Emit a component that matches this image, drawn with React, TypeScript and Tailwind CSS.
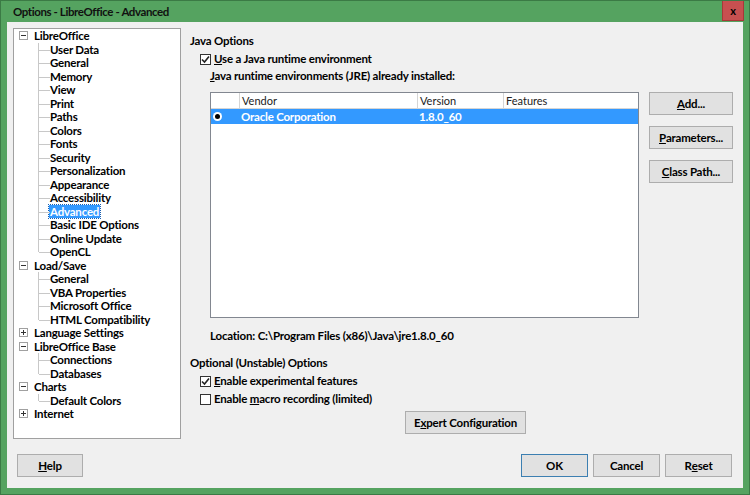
import React from "react";

const font = { fontFamily: 'Lato, "Noto Sans", "Liberation Sans", sans-serif' };

type Node = { label: string; depth: 0 | 1; expander?: "minus" | "plus"; selected?: boolean; last?: boolean };

const tree: Node[] = [
  { label: "LibreOffice", depth: 0, expander: "minus" },
  { label: "User Data", depth: 1 },
  { label: "General", depth: 1 },
  { label: "Memory", depth: 1 },
  { label: "View", depth: 1 },
  { label: "Print", depth: 1 },
  { label: "Paths", depth: 1 },
  { label: "Colors", depth: 1 },
  { label: "Fonts", depth: 1 },
  { label: "Security", depth: 1 },
  { label: "Personalization", depth: 1 },
  { label: "Appearance", depth: 1 },
  { label: "Accessibility", depth: 1 },
  { label: "Advanced", depth: 1, selected: true },
  { label: "Basic IDE Options", depth: 1 },
  { label: "Online Update", depth: 1 },
  { label: "OpenCL", depth: 1, last: true },
  { label: "Load/Save", depth: 0, expander: "minus" },
  { label: "General", depth: 1 },
  { label: "VBA Properties", depth: 1 },
  { label: "Microsoft Office", depth: 1 },
  { label: "HTML Compatibility", depth: 1, last: true },
  { label: "Language Settings", depth: 0, expander: "plus" },
  { label: "LibreOffice Base", depth: 0, expander: "minus" },
  { label: "Connections", depth: 1 },
  { label: "Databases", depth: 1, last: true },
  { label: "Charts", depth: 0, expander: "minus" },
  { label: "Default Colors", depth: 1, last: true },
  { label: "Internet", depth: 0, expander: "plus" },
];

const Expander = ({ kind }: { kind: "minus" | "plus" }) => (
  <div className="relative w-[9px] h-[9px] border border-[#a0a0a0] bg-white">
    <div className="absolute left-[1px] top-[3px] w-[5px] h-[1px] bg-[#333]" />
    {kind === "plus" && <div className="absolute left-[3px] top-[1px] w-[1px] h-[5px] bg-[#333]" />}
  </div>
);

const TreeRow = ({ n }: { n: Node }) => {
  if (n.depth === 0) {
    return (
      <div className="relative flex items-center h-[13.5px]">
        <div className="w-[20px] pl-[5px] flex items-center">
          {n.expander && <Expander kind={n.expander} />}
        </div>
        <span className="font-bold text-[11.5px] leading-[13px] tracking-[-0.2px] text-black">{n.label}</span>
      </div>
    );
  }
  return (
    <div className="relative flex items-center h-[13.5px]">
      <div className={`absolute left-[24px] top-0 w-[1px] bg-[#c8c8c8] ${n.last ? "h-[7px]" : "h-full"}`} />
      <div className="absolute left-[25px] top-[7px] w-[11px] h-[1px] bg-[#c8c8c8]" />
      <span
        className={`ml-[35px] px-[1px] font-bold text-[11.5px] leading-[13px] tracking-[-0.2px] ${
          n.selected ? "bg-[#3399ff] text-white outline outline-1 outline-dotted outline-[#1a5fb0]" : "text-black"
        }`}
      >
        {n.label}
      </span>
    </div>
  );
};

const Check = ({ on }: { on: boolean }) => (
  <div className="w-[11px] h-[11px] border border-[#333] bg-white flex items-center justify-center">
    {on && (
      <svg width="9" height="9" viewBox="0 0 9 9">
        <path d="M1 4.5 L3.5 7 L8 1.5" fill="none" stroke="#222" strokeWidth="1.6" />
      </svg>
    )}
  </div>
);

const Btn = ({ children, w, def }: { children: React.ReactNode; w: string; def?: boolean }) => (
  <div
    className={`${w} h-[23px] flex items-center justify-center bg-[#e1e1e1] border ${
      def ? "border-[#3c7fb1]" : "border-[#adadad]"
    } font-bold text-[11.5px] tracking-[-0.2px] text-black`}
  >
    {children}
  </div>
);

export default function App() {
  return (
    <div style={font} className="w-[750px] h-[495px] bg-[#55a360] border border-[#3b7a45] flex flex-col overflow-hidden">
      {/* Title bar */}
      <div className="h-[21px] flex items-center justify-between">
        <span className="pl-[12px] font-bold text-[11.5px] tracking-[-0.4px] text-[#111]">Options - LibreOffice - Advanced</span>
        <div className="mr-[5px] self-start w-[22px] h-[20px] bg-[#c75050] border border-[#a83838] border-t-0 flex items-center justify-center">
          <span className="font-bold text-[11px] text-black leading-none">x</span>
        </div>
      </div>

      {/* Client area */}
      <div className="flex-1 mx-[6px] mb-[6px] bg-[#f0f0f0] flex flex-col">
        <div className="flex mt-[6px] ml-[6px]">
          {/* Tree */}
          <div className="w-[168px] h-[411px] bg-white border border-[#a0a0a0]">
            {tree.map((n, i) => (
              <TreeRow key={i} n={n} />
            ))}
          </div>

          {/* Right panel */}
          <div className="ml-[9px] flex flex-col text-[11.5px] tracking-[-0.2px] font-bold text-black">
            <div className="mt-[6px] h-[14px] leading-[14px]">Java Options</div>
            <div className="mt-[4px] h-[14px] flex items-center gap-[3px] ml-[10px]">
              <Check on />
              <span>
                <span className="underline">U</span>se a Java runtime environment
              </span>
            </div>
            <div className="mt-[3px] h-[14px] leading-[14px] ml-[20px]">
              <span className="underline">J</span>ava runtime environments (JRE) already installed:
            </div>

            <div className="mt-[9px] ml-[20px] flex">
              {/* Table */}
              <div className="w-[429px] h-[226px] bg-white border border-[#828790] flex flex-col">
                <div className="h-[16px] flex border-b border-[#d5d5d5] font-normal text-[11px] tracking-normal text-[#222]">
                  <div className="w-[29px] border-r border-[#d5d5d5]" />
                  <div className="w-[178px] border-r border-[#d5d5d5] pl-[2px] leading-[15px]">Vendor</div>
                  <div className="w-[86px] border-r border-[#d5d5d5] pl-[2px] leading-[15px]">Version</div>
                  <div className="flex-1 pl-[2px] leading-[15px]">Features</div>
                </div>
                <div className="h-[15px] flex items-center bg-[#3399ff] text-white">
                  <div className="w-[29px] flex items-center pl-[2px]">
                    <div className="w-[9px] h-[9px] rounded-full bg-white flex items-center justify-center">
                      <div className="w-[5px] h-[5px] rounded-full bg-black" />
                    </div>
                  </div>
                  <div className="w-[178px] pl-[1px]">Oracle Corporation</div>
                  <div className="w-[86px] pl-[1px]">1.8.0_60</div>
                </div>
              </div>

              {/* Side buttons */}
              <div className="ml-[10px] flex flex-col gap-[11px]">
                <Btn w="w-[84px]">
                  <span className="underline">A</span>dd...
                </Btn>
                <Btn w="w-[84px]">
                  <span className="underline">P</span>arameters...
                </Btn>
                <Btn w="w-[84px]">
                  <span className="underline">C</span>lass Path...
                </Btn>
              </div>
            </div>

            <div className="mt-[11px] ml-[20px] h-[14px] leading-[14px]">
              Location: C:\Program Files (x86)\Java\jre1.8.0_60
            </div>

            <div className="mt-[13px] h-[14px] leading-[14px]">Optional (Unstable) Options</div>
            <div className="mt-[4px] h-[14px] flex items-center gap-[3px] ml-[10px]">
              <Check on />
              <span>
                <span className="underline">E</span>nable experimental features
              </span>
            </div>
            <div className="mt-[4px] h-[14px] flex items-center gap-[3px] ml-[10px]">
              <Check on={false} />
              <span>
                Enable <span className="underline">m</span>acro recording (limited)
              </span>
            </div>
            <div className="mt-[5px] ml-[215px]">
              <Btn w="w-[121px]">
                E<span className="underline">x</span>pert Configuration
              </Btn>
            </div>
          </div>
        </div>

        {/* Bottom buttons */}
        <div className="mt-[15px] flex items-center px-[10px]">
          <Btn w="w-[66px]">
            <span className="underline">H</span>elp
          </Btn>
          <div className="flex-1" />
          <div className="flex gap-[5px] mr-[1px]">
            <Btn w="w-[67px]" def>
              OK
            </Btn>
            <Btn w="w-[67px]">Cancel</Btn>
            <Btn w="w-[67px]">
              R<span className="underline">e</span>set
            </Btn>
          </div>
        </div>
      </div>
    </div>
  );
}
